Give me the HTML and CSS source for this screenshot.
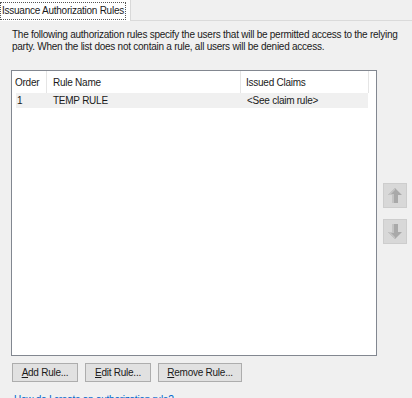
FILE: index.html
```html
<!DOCTYPE html>
<html lang="en">
<head>
  <meta charset="UTF-8">
  <title>Issuance Authorization Rules</title>
  <link rel="stylesheet" href="styles.css">
</head>
<body>
  <div class="tabs">
    <div class="tab"><span class="tab-label">Issuance Authorization Rules</span></div>
  </div>

  <div class="pane">
    <p class="desc">The following authorization rules specify the users that will be permitted access to the relying party. When the list does not contain a rule, all users will be denied access.</p>

    <div class="list-area">
      <div class="listview">
        <div class="lv-head">
          <div class="col col-order">Order</div>
          <div class="col col-name">Rule Name</div>
          <div class="col col-claims">Issued Claims</div>
        </div>
        <div class="lv-row">
          <div class="col col-order">1</div>
          <div class="col col-name">TEMP RULE</div>
          <div class="col col-claims">&lt;See claim rule&gt;</div>
        </div>
      </div>

      <div class="order-btns">
        <div class="order-btn">
          <svg width="22" height="23" viewBox="0 0 22 23">
            <path d="M11 4 L18 11 L14 11 L14 19 L8 19 L8 11 L4 11 Z" fill="#a9a9a9"/>
            <path d="M11 4 L4 11 L8 11 L8 19 L10 19 L10 10 L7 10 L11 6 Z" fill="#c4c4c4"/>
          </svg>
        </div>
        <div class="order-btn">
          <svg width="22" height="23" viewBox="0 0 22 23">
            <path d="M11 19 L18 12 L14 12 L14 4 L8 4 L8 12 L4 12 Z" fill="#a9a9a9"/>
            <path d="M8 4 L10 4 L10 13 L7 13 L11 17 L11 19 L4 12 L8 12 Z" fill="#c4c4c4"/>
          </svg>
        </div>
      </div>
    </div>

    <div class="actions">
      <button class="btn btn-add"><u>A</u>dd Rule...</button>
      <button class="btn btn-edit"><u>E</u>dit Rule...</button>
      <button class="btn btn-remove"><u>R</u>emove Rule...</button>
    </div>

    <a class="help-link" href="#">How do I create an authorization rule?</a>
  </div>
</body>
</html>
```

FILE: styles.css
```css
body {
  margin: 0;
  padding: 0;
  font-family: "Liberation Sans", Arial, sans-serif;
  font-size: 10px;
  letter-spacing: -0.25px;
  color: #1a1a1a;
  background-color: #f0f0f0;
  width: 412px;
  height: 398px;
  overflow: hidden;
}

.tabs {
  display: flex;
  height: 20px;
  border-bottom: 1px solid #dadada;
}

.tab {
  width: 130px;
  background-color: #ffffff;
  border-right: 1px solid #d9d9d9;
  margin-bottom: -1px;
  padding: 2px 0 0 0;
  white-space: nowrap;
}

.tab-label {
  display: inline-block;
  border: 1px dotted #555;
  padding: 2px 1px 3px 1px;
  line-height: 11px;
}

.pane {
  padding: 8px 0 0 12px;
}

.desc {
  margin: 0;
  line-height: 12px;
  width: 398px;
}

.list-area {
  display: flex;
  align-items: center;
  gap: 6px;
  margin-top: 17px;
  margin-left: -1px;
}

.listview {
  width: 364px;
  height: 284px;
  background-color: #ffffff;
  border: 1px solid #828790;
}

.lv-head {
  display: flex;
  height: 22px;
  align-items: stretch;
}

.lv-head .col {
  display: flex;
  align-items: center;
  border-right: 1px solid #e5e5e5;
}

.lv-head .col-order {
  width: 31px;
  padding-left: 3px;
}

.lv-head .col-name {
  width: 187px;
  padding-left: 6px;
}

.lv-head .col-claims {
  width: 122px;
  padding-left: 5px;
}

.lv-row {
  display: flex;
  height: 15px;
  align-items: center;
  margin-left: 4px;
  width: 352px;
  background-color: #f0f0f0;
}

.lv-row .col-order {
  width: 30px;
  padding-left: 1px;
}

.lv-row .col-name {
  width: 188px;
  padding-left: 6px;
}

.lv-row .col-claims {
  padding-left: 6px;
}

.order-btns {
  display: flex;
  flex-direction: column;
  gap: 11px;
}

.order-btn {
  width: 22px;
  height: 23px;
  background-color: #d8d8d8;
  border: 1px solid #cdcdcd;
}

.order-btn svg {
  display: block;
}

.actions {
  display: flex;
  gap: 7px;
  margin-top: 7px;
}

.btn {
  height: 19px;
  padding: 0;
  font-family: "Liberation Sans", Arial, sans-serif;
  font-size: 10px;
  letter-spacing: -0.25px;
  color: #1a1a1a;
  background-color: #e1e1e1;
  border: 1px solid #adadad;
  border-radius: 0;
}

.btn-add,
.btn-edit {
  width: 66px;
}

.btn-remove {
  width: 84px;
}

.help-link {
  display: block;
  margin-top: 12px;
  margin-left: 2px;
  color: #0066cc;
  text-decoration: none;
}
```
